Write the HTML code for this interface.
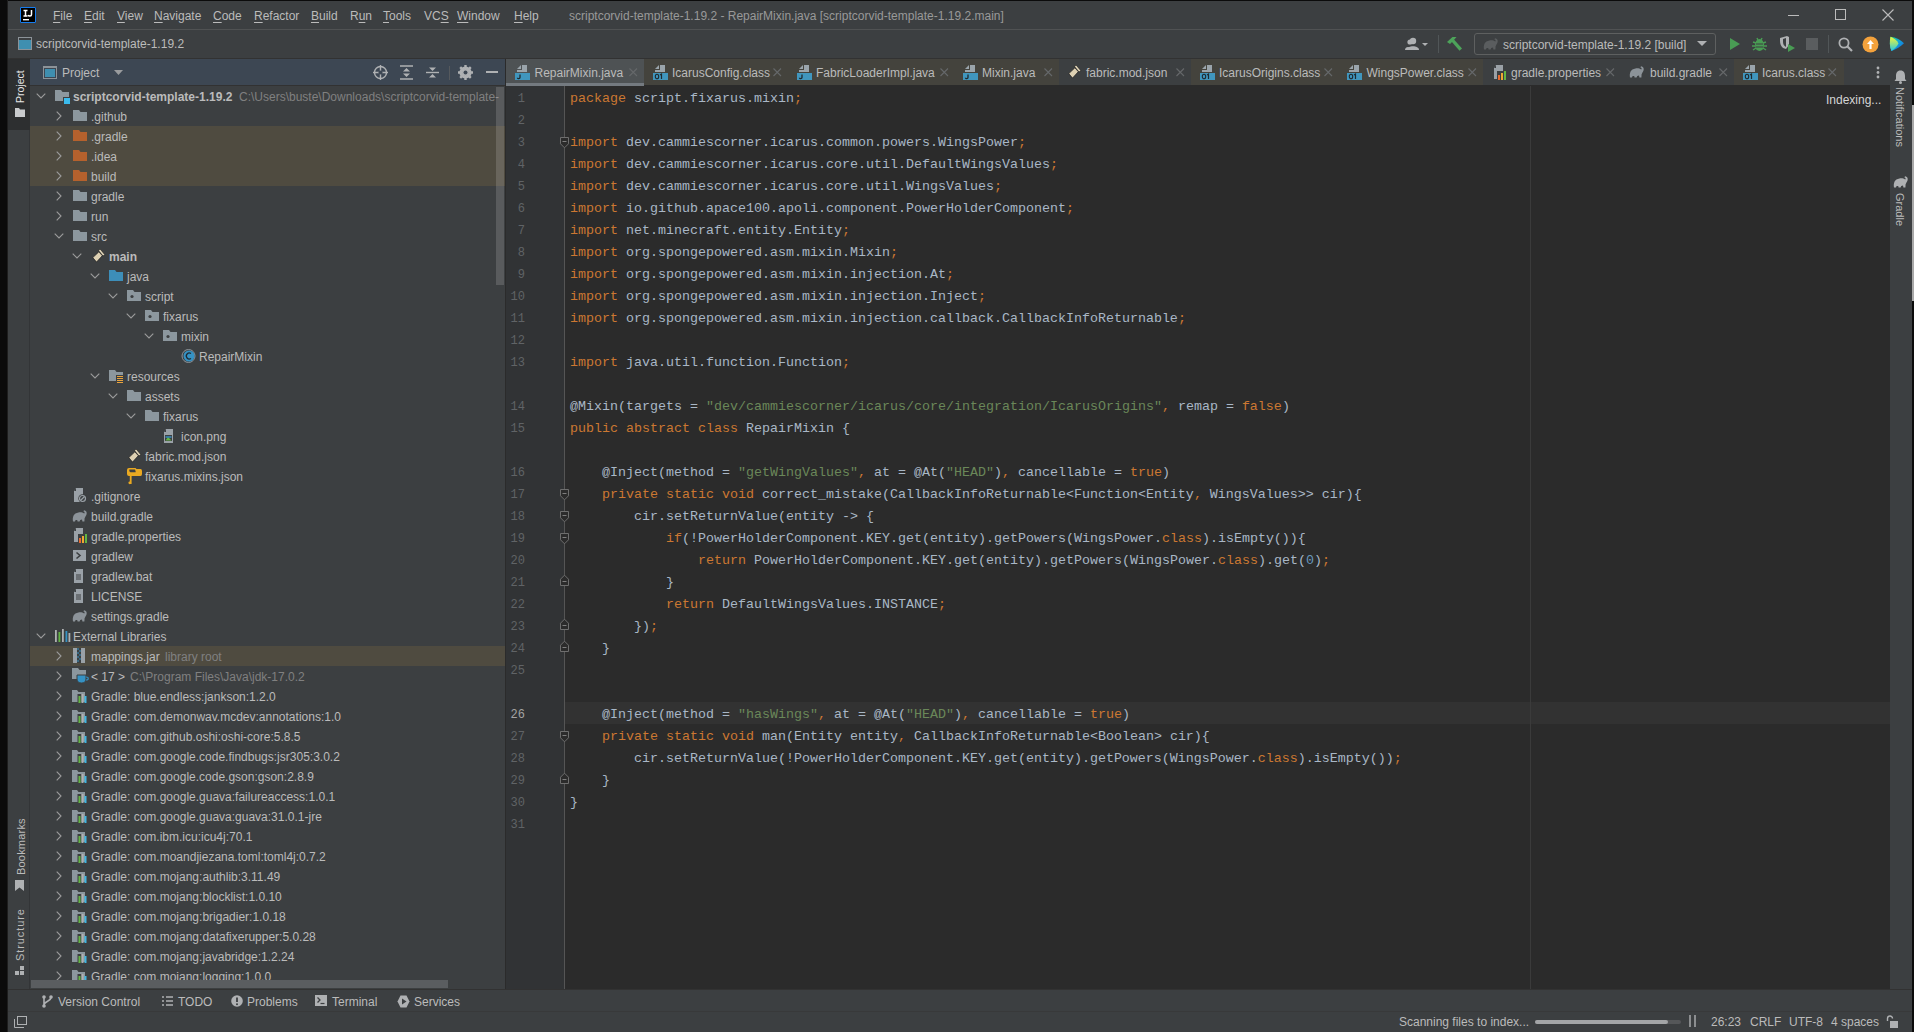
<!DOCTYPE html><html><head><meta charset="utf-8"><style>
*{margin:0;padding:0;box-sizing:border-box}
html,body{width:1914px;height:1032px;overflow:hidden;background:#0b0b0b;font-family:"Liberation Sans", sans-serif;font-size:12px;color:#bbbbbb}
.a{position:absolute}
.t{position:absolute;white-space:pre;line-height:14px}
svg{position:absolute;overflow:visible}
.code{position:absolute;left:570px;white-space:pre;font-family:"Liberation Mono", monospace;font-size:13.33px;line-height:22px;color:#a9b7c6}
.ln{position:absolute;width:40px;left:485px;text-align:right;font-family:"Liberation Mono", monospace;font-size:12px;line-height:22px;color:#606366}
.k{color:#cc7832}
.s{color:#6a8759}
.n{color:#6897bb}
.u{text-decoration:underline;text-underline-offset:2px}
</style></head><body>
<div class="a" style="left:8px;top:1px;width:1904px;height:1031px;background:#3c3f41"></div>
<div class="a" style="left:7px;top:0;width:1px;height:1032px;background:#1e1e1e"></div>
<div class="a" style="left:8px;top:29px;width:1904px;height:1px;background:#505253"></div>
<div class="a" style="left:20px;top:7px;width:16px;height:16px;background:#000;border:1.3px solid #167df0;border-radius:1px"></div>
<svg style="left:20px;top:7px" width="16" height="16"><path d="M3.5 3.5 H7.5 M5.5 3.5 V9 M3.5 9 H7.5" stroke="#fff" stroke-width="1.5" fill="none"/><path d="M11.5 3 V7.5 C11.5 9.5 8.5 9.5 8.2 8" stroke="#fff" stroke-width="1.5" fill="none"/><rect x="3" y="12" width="6" height="1.4" fill="#fff"/></svg>
<div class="t" style="left:53px;top:9px;color:#bbbbbb"><span class="u">F</span>ile</div>
<div class="t" style="left:84px;top:9px;color:#bbbbbb"><span class="u">E</span>dit</div>
<div class="t" style="left:117px;top:9px;color:#bbbbbb"><span class="u">V</span>iew</div>
<div class="t" style="left:154px;top:9px;color:#bbbbbb"><span class="u">N</span>avigate</div>
<div class="t" style="left:213px;top:9px;color:#bbbbbb"><span class="u">C</span>ode</div>
<div class="t" style="left:254px;top:9px;color:#bbbbbb"><span class="u">R</span>efactor</div>
<div class="t" style="left:311px;top:9px;color:#bbbbbb"><span class="u">B</span>uild</div>
<div class="t" style="left:350px;top:9px;color:#bbbbbb">R<span class="u">u</span>n</div>
<div class="t" style="left:383px;top:9px;color:#bbbbbb"><span class="u">T</span>ools</div>
<div class="t" style="left:424px;top:9px;color:#bbbbbb">VC<span class="u">S</span></div>
<div class="t" style="left:457px;top:9px;color:#bbbbbb"><span class="u">W</span>indow</div>
<div class="t" style="left:514px;top:9px;color:#bbbbbb"><span class="u">H</span>elp</div>
<div class="t" style="left:569px;top:9px;color:#999999">scriptcorvid-template-1.19.2 - RepairMixin.java [scriptcorvid-template-1.19.2.main]</div>
<div class="a" style="left:1788px;top:15px;width:11px;height:1px;background:#bbb"></div>
<div class="a" style="left:1835px;top:9px;width:11px;height:11px;border:1px solid #bbb"></div>
<svg style="left:1882px;top:9px" width="12" height="12"><path d="M0.5 0.5 L11.5 11.5 M11.5 0.5 L0.5 11.5" stroke="#bbb" stroke-width="1.1"/></svg>
<div class="a" style="left:8px;top:58px;width:1904px;height:1px;background:#323232"></div>
<div class="a" style="left:18px;top:37px;width:14px;height:13px;border:1px solid #8c9399;background:#3c3f41"></div>
<div class="a" style="left:19px;top:40px;width:12px;height:9px;background:#3f8fb0"></div>
<div class="t" style="left:36px;top:37px">scriptcorvid-template-1.19.2</div>
<svg style="left:1405px;top:37px" width="26" height="14"><circle cx="8" cy="4" r="3.2" fill="#afb1b3"/><path d="M2 13 C2 8 14 8 14 13 Z" fill="#afb1b3"/><circle cx="5" cy="5" r="2.6" fill="#afb1b3"/><path d="M0 13 C0 9 6 9 6 13Z" fill="#afb1b3"/><path d="M17 6 L23 6 L20 9 Z" fill="#afb1b3"/></svg>
<div class="a" style="left:1438px;top:35px;width:1px;height:18px;background:#515658"></div>
<svg style="left:1446px;top:36px" width="18" height="17"><path d="M1 6 L6.5 1 H10.5 L7 5 L4 8Z" fill="#4da35a"/><path d="M5.5 5.5 L8 3.5 L16 12.5 L13.5 14.8Z" fill="#4da35a"/></svg>
<div class="a" style="left:1474px;top:33px;width:242px;height:22px;border:1px solid #5e6060;border-radius:3px;background:#3c3f41"></div>
<svg style="left:1483px;top:38px" width="16" height="13"><path d="M1 11.5 C0.3 7 1.5 3 6.5 2.4 C9 2.1 11 2.6 12.2 3.6 C13 2.6 12.6 1.4 11.4 1.4 L12 0.2 C14.8 0.4 15.6 3.4 13.6 6.2 L12.6 8.2 L12.4 11.5 L10.4 11.5 L10 9.6 L8.2 9.9 L7.6 11.5 L5.6 11.5 L5.2 9.9 L3.6 9.9 L3 11.5 Z" fill="#5a5d5f"/></svg>
<div class="t" style="left:1503px;top:38px">scriptcorvid-template-1.19.2 [build]</div>
<svg style="left:1697px;top:41px" width="10" height="6"><path d="M0 0 L10 0 L5 5Z" fill="#afb1b3"/></svg>
<svg style="left:1729px;top:37px" width="12" height="14"><path d="M1 1 L11 7 L1 13Z" fill="#499c54"/></svg>
<svg style="left:1752px;top:36px" width="15" height="16"><ellipse cx="7.5" cy="9" rx="4.5" ry="6" fill="#499c54"/><path d="M1 6 L4 7 M14 6 L11 7 M0 10 L3 10 M15 10 L12 10 M1 14 L4 12 M14 14 L11 12 M5 2 L6 4 M10 2 L9 4" stroke="#499c54" stroke-width="1.5"/><path d="M4 8 L11 8 M4 11 L11 11" stroke="#3c3f41" stroke-width="1"/></svg>
<svg style="left:1779px;top:36px" width="17" height="17"><path d="M1 2 L8 0 L10 1 L10 9 L7 13 L4 12 C2 10 1 8 1 5Z" fill="#afb1b3"/><path d="M4 3 L7 2 L7 11 C5 10 4 8 4 6Z" fill="#3c3f41"/><path d="M9 8 L16 12 L9 16Z" fill="#499c54"/></svg>
<div class="a" style="left:1806px;top:38px;width:12px;height:12px;background:#5a5d5f"></div>
<div class="a" style="left:1828px;top:35px;width:1px;height:18px;background:#515658"></div>
<svg style="left:1838px;top:37px" width="15" height="15"><circle cx="6" cy="6" r="4.6" fill="none" stroke="#afb1b3" stroke-width="1.8"/><path d="M9.5 9.5 L14 14" stroke="#afb1b3" stroke-width="2.2"/></svg>
<svg style="left:1862px;top:36px" width="17" height="17"><circle cx="8.5" cy="8.5" r="8" fill="#f4a23c"/><path d="M8.5 4 L12 8 L9.6 8 L9.6 13 L7.4 13 L7.4 8 L5 8Z" fill="#fff"/></svg>
<svg style="left:1889px;top:36px" width="16" height="16"><defs><linearGradient id="tbg" x1="0" y1="0" x2="0" y2="1"><stop offset="0" stop-color="#f3f53c"/><stop offset="0.5" stop-color="#8fe08a"/><stop offset="1" stop-color="#22c7e6"/></linearGradient><linearGradient id="tbb" x1="0" y1="0" x2="1" y2="1"><stop offset="0" stop-color="#21d789"/><stop offset="0.5" stop-color="#0ea2e0"/><stop offset="1" stop-color="#1f5fd6"/></linearGradient></defs><path d="M1.5 0.8 C7 1.5 12 4 15 7.3 C12 10.5 7 13.5 2.5 15 C0.5 11 0.5 5 1.5 0.8Z" fill="url(#tbb)"/><path d="M1.5 0.8 C5 2 8 4.5 9.5 7.5 C8 10.5 5 13 2.5 15 C0.5 11 0.5 5 1.5 0.8Z" fill="url(#tbg)"/></svg>
<div class="a" style="left:8px;top:59px;width:22px;height:930px;background:#3c3f41"></div>
<div class="a" style="left:8px;top:59px;width:22px;height:71px;background:#2d2f30"></div>
<div class="a" style="left:29px;top:130px;width:1px;height:859px;background:#333537"></div>
<div class="t" style="left:14px;top:103px;color:#e6e6e6;transform-origin:0 0;transform:rotate(-90deg);font-size:10.5px;line-height:13px">Project</div>
<svg style="left:15px;top:108px" width="10" height="9"><path d="M0 0 L4 0 L5 1.5 L10 1.5 L10 9 L0 9Z" fill="#c9cbcd"/></svg>
<div class="t" style="left:14px;top:875px;color:#bbbbbb;transform-origin:0 0;transform:rotate(-90deg);font-size:11px;letter-spacing:0.2px">Bookmarks</div>
<svg style="left:15px;top:880px" width="9" height="11"><path d="M0 0 L9 0 L9 11 L4.5 7.5 L0 11Z" fill="#afb1b3"/></svg>
<div class="t" style="left:13px;top:961px;color:#bbbbbb;transform-origin:0 0;transform:rotate(-90deg);font-size:11px;letter-spacing:0.9px">Structure</div>
<svg style="left:15px;top:966px" width="10" height="10"><rect x="5" y="0" width="4" height="4" fill="#afb1b3"/><rect x="0" y="5" width="4" height="4" fill="#afb1b3"/><rect x="5" y="5" width="4" height="4" fill="#afb1b3"/></svg>
<div class="a" style="left:30px;top:59px;width:475px;height:26px;background:#3d4753"></div>
<div class="a" style="left:30px;top:85px;width:475px;height:1px;background:#323232"></div>
<div class="a" style="left:505px;top:59px;width:1px;height:930px;background:#2b2b2b"></div>
<div class="a" style="left:43px;top:66px;width:14px;height:13px;border:1px solid #8c9399;border-top-width:2px"></div>
<div class="a" style="left:45px;top:69px;width:10px;height:8px;background:#3f8fb0"></div>
<div class="t" style="left:62px;top:66px;color:#bbbbbb">Project</div>
<svg style="left:114px;top:70px" width="9" height="5"><path d="M0 0 L9 0 L4.5 5Z" fill="#9a9c9e"/></svg>
<svg style="left:373px;top:65px" width="15" height="15"><circle cx="7.5" cy="7.5" r="6" fill="none" stroke="#afb1b3" stroke-width="1.4"/><path d="M7.5 0 V15 M0 7.5 H15" stroke="#afb1b3" stroke-width="1.4"/><circle cx="7.5" cy="7.5" r="2" fill="#3d4753"/></svg>
<svg style="left:400px;top:65px" width="13" height="15"><path d="M0 1 H13 M0 14 H13" stroke="#afb1b3" stroke-width="1.4"/><path d="M6.5 3 L10 6.5 H3Z M6.5 12 L10 8.5 H3Z" fill="#afb1b3"/></svg>
<svg style="left:426px;top:65px" width="13" height="15"><path d="M0 7.5 H13" stroke="#afb1b3" stroke-width="1.4"/><path d="M6.5 6 L10 2.5 H3Z M6.5 9 L10 12.5 H3Z" fill="#afb1b3"/></svg>
<div class="a" style="left:449px;top:66px;width:1px;height:14px;background:#55595d"></div>
<svg style="left:458px;top:65px" width="15" height="15"><circle cx="7.5" cy="7.5" r="4.6" fill="none" stroke="#afb1b3" stroke-width="3"/><path d="M7.5 0 V15 M0 7.5 H15 M2.2 2.2 L12.8 12.8 M12.8 2.2 L2.2 12.8" stroke="#afb1b3" stroke-width="2.4"/><circle cx="7.5" cy="7.5" r="2" fill="#3d4753"/></svg>
<div class="a" style="left:486px;top:71px;width:12px;height:2px;background:#afb1b3"></div>
<div class="a" style="left:30px;top:86px;width:475px;height:903px;overflow:hidden">
<svg style="left:6px;top:7px" width="10" height="6"><path d="M0.7 0.7 L5 5 L9.3 0.7" fill="none" stroke="#9c9c9c" stroke-width="1.1"/></svg>
<svg style="left:25px;top:4px" width="14" height="12"><path d="M0 0 H6 L7.5 2 H14 V11 H0Z" fill="#8c979e"/></svg>
<div class="a" style="left:33px;top:11px;width:7px;height:7px;background:#3bbbed;border-left:1px solid #3c3f41;border-top:1px solid #3c3f41"></div>
<div class="t" style="left:43px;top:4px;font-weight:bold">scriptcorvid-template-1.19.2</div>
<div class="t" style="left:209px;top:4px;color:#808080">C:\Users\buste\Downloads\scriptcorvid-template-</div>
<svg style="left:26px;top:25px" width="6" height="10"><path d="M0.7 0.7 L5 5 L0.7 9.3" fill="none" stroke="#9c9c9c" stroke-width="1.1"/></svg>
<svg style="left:43px;top:24px" width="14" height="12"><path d="M0 0 H6 L7.5 2 H14 V11 H0Z" fill="#8c979e"/></svg>
<div class="t" style="left:61px;top:24px;font-weight:normal">.github</div>
<div class="a" style="left:0;top:40px;width:475px;height:20px;background:#4f4b40"></div>
<svg style="left:26px;top:45px" width="6" height="10"><path d="M0.7 0.7 L5 5 L0.7 9.3" fill="none" stroke="#9c9c9c" stroke-width="1.1"/></svg>
<svg style="left:43px;top:44px" width="14" height="12"><path d="M0 0 H6 L7.5 2 H14 V11 H0Z" fill="#b5612d"/></svg>
<div class="t" style="left:61px;top:44px;font-weight:normal">.gradle</div>
<div class="a" style="left:0;top:60px;width:475px;height:20px;background:#4f4b40"></div>
<svg style="left:26px;top:65px" width="6" height="10"><path d="M0.7 0.7 L5 5 L0.7 9.3" fill="none" stroke="#9c9c9c" stroke-width="1.1"/></svg>
<svg style="left:43px;top:64px" width="14" height="12"><path d="M0 0 H6 L7.5 2 H14 V11 H0Z" fill="#b5612d"/></svg>
<div class="t" style="left:61px;top:64px;font-weight:normal">.idea</div>
<div class="a" style="left:0;top:80px;width:475px;height:20px;background:#4f4b40"></div>
<svg style="left:26px;top:85px" width="6" height="10"><path d="M0.7 0.7 L5 5 L0.7 9.3" fill="none" stroke="#9c9c9c" stroke-width="1.1"/></svg>
<svg style="left:43px;top:84px" width="14" height="12"><path d="M0 0 H6 L7.5 2 H14 V11 H0Z" fill="#b5612d"/></svg>
<div class="t" style="left:61px;top:84px;font-weight:normal">build</div>
<svg style="left:26px;top:105px" width="6" height="10"><path d="M0.7 0.7 L5 5 L0.7 9.3" fill="none" stroke="#9c9c9c" stroke-width="1.1"/></svg>
<svg style="left:43px;top:104px" width="14" height="12"><path d="M0 0 H6 L7.5 2 H14 V11 H0Z" fill="#8c979e"/></svg>
<div class="t" style="left:61px;top:104px;font-weight:normal">gradle</div>
<svg style="left:26px;top:125px" width="6" height="10"><path d="M0.7 0.7 L5 5 L0.7 9.3" fill="none" stroke="#9c9c9c" stroke-width="1.1"/></svg>
<svg style="left:43px;top:124px" width="14" height="12"><path d="M0 0 H6 L7.5 2 H14 V11 H0Z" fill="#8c979e"/></svg>
<div class="t" style="left:61px;top:124px;font-weight:normal">run</div>
<svg style="left:24px;top:147px" width="10" height="6"><path d="M0.7 0.7 L5 5 L9.3 0.7" fill="none" stroke="#9c9c9c" stroke-width="1.1"/></svg>
<svg style="left:43px;top:144px" width="14" height="12"><path d="M0 0 H6 L7.5 2 H14 V11 H0Z" fill="#8c979e"/></svg>
<div class="t" style="left:61px;top:144px;font-weight:normal">src</div>
<svg style="left:42px;top:167px" width="10" height="6"><path d="M0.7 0.7 L5 5 L9.3 0.7" fill="none" stroke="#9c9c9c" stroke-width="1.1"/></svg>
<svg style="left:61px;top:162px" width="15" height="15"><path d="M1.8 9.6 L7.9 3.8 L11.3 7.7 L5.5 14.1Z" fill="#ddd0b2" stroke="#1e1e1e" stroke-width="0.7"/><path d="M7.6 2.7 L9.2 1.1 L13.7 6.5 L12.1 8.1Z" fill="#e3d7ba" stroke="#1e1e1e" stroke-width="0.7"/></svg>
<div class="t" style="left:79px;top:164px;font-weight:bold">main</div>
<svg style="left:60px;top:187px" width="10" height="6"><path d="M0.7 0.7 L5 5 L9.3 0.7" fill="none" stroke="#9c9c9c" stroke-width="1.1"/></svg>
<svg style="left:79px;top:184px" width="14" height="12"><path d="M0 0 H6 L7.5 2 H14 V11 H0Z" fill="#3d8eb9"/></svg>
<div class="t" style="left:97px;top:184px;font-weight:normal">java</div>
<svg style="left:78px;top:207px" width="10" height="6"><path d="M0.7 0.7 L5 5 L9.3 0.7" fill="none" stroke="#9c9c9c" stroke-width="1.1"/></svg>
<svg style="left:97px;top:204px" width="14" height="12"><path d="M0 0 H6 L7.5 2 H14 V11 H0Z" fill="#8c979e"/><circle cx="5" cy="6.5" r="1.6" fill="#3c3f41"/></svg>
<div class="t" style="left:115px;top:204px;font-weight:normal">script</div>
<svg style="left:96px;top:227px" width="10" height="6"><path d="M0.7 0.7 L5 5 L9.3 0.7" fill="none" stroke="#9c9c9c" stroke-width="1.1"/></svg>
<svg style="left:115px;top:224px" width="14" height="12"><path d="M0 0 H6 L7.5 2 H14 V11 H0Z" fill="#8c979e"/><circle cx="5" cy="6.5" r="1.6" fill="#3c3f41"/></svg>
<div class="t" style="left:133px;top:224px;font-weight:normal">fixarus</div>
<svg style="left:114px;top:247px" width="10" height="6"><path d="M0.7 0.7 L5 5 L9.3 0.7" fill="none" stroke="#9c9c9c" stroke-width="1.1"/></svg>
<svg style="left:133px;top:244px" width="14" height="12"><path d="M0 0 H6 L7.5 2 H14 V11 H0Z" fill="#8c979e"/><circle cx="5" cy="6.5" r="1.6" fill="#3c3f41"/></svg>
<div class="t" style="left:151px;top:244px;font-weight:normal">mixin</div>
<svg style="left:151px;top:263px" width="14" height="14"><circle cx="7.5" cy="7" r="6.5" fill="#3c3f41" stroke="#8c9399" stroke-width="1"/><circle cx="8" cy="7" r="5.5" fill="#3592c4"/><path d="M10 4.5 A3 3 0 1 0 10 9.5" fill="none" stroke="#1e2a33" stroke-width="1.3"/></svg>
<div class="t" style="left:169px;top:264px;font-weight:normal">RepairMixin</div>
<svg style="left:60px;top:287px" width="10" height="6"><path d="M0.7 0.7 L5 5 L9.3 0.7" fill="none" stroke="#9c9c9c" stroke-width="1.1"/></svg>
<svg style="left:79px;top:284px" width="14" height="12"><path d="M0 0 H6 L7.5 2 H14 V11 H0Z" fill="#8c979e"/></svg>
<svg style="left:86px;top:289px" width="8" height="8"><rect x="0" y="0" width="8" height="8" fill="#3c3f41"/><path d="M1 1.5 H7 M1 3.5 H7 M1 5.5 H7 M1 7.5 H7" stroke="#e8a33e" stroke-width="1"/></svg>
<div class="t" style="left:97px;top:284px;font-weight:normal">resources</div>
<svg style="left:78px;top:307px" width="10" height="6"><path d="M0.7 0.7 L5 5 L9.3 0.7" fill="none" stroke="#9c9c9c" stroke-width="1.1"/></svg>
<svg style="left:97px;top:304px" width="14" height="12"><path d="M0 0 H6 L7.5 2 H14 V11 H0Z" fill="#8c979e"/></svg>
<div class="t" style="left:115px;top:304px;font-weight:normal">assets</div>
<svg style="left:96px;top:327px" width="10" height="6"><path d="M0.7 0.7 L5 5 L9.3 0.7" fill="none" stroke="#9c9c9c" stroke-width="1.1"/></svg>
<svg style="left:115px;top:324px" width="14" height="12"><path d="M0 0 H6 L7.5 2 H14 V11 H0Z" fill="#8c979e"/></svg>
<div class="t" style="left:133px;top:324px;font-weight:normal">fixarus</div>
<svg style="left:133px;top:343px" width="14" height="14"><path d="M3 0 H10 V14 H1 V3Z" fill="#9aa1a7"/><path d="M1 3 H3 V0Z" fill="#3c3f41"/><rect x="2" y="6" width="7" height="6" fill="#3c3f41"/><path d="M2.5 11.5 L5 8 L8.5 11.5Z" fill="#62b543"/><rect x="2.5" y="7" width="6" height="2" fill="#3592c4" opacity="0.7"/></svg>
<div class="t" style="left:151px;top:344px;font-weight:normal">icon.png</div>
<svg style="left:97px;top:362px" width="15" height="15"><path d="M1.8 9.6 L7.9 3.8 L11.3 7.7 L5.5 14.1Z" fill="#ddd0b2" stroke="#1e1e1e" stroke-width="0.7"/><path d="M7.6 2.7 L9.2 1.1 L13.7 6.5 L12.1 8.1Z" fill="#e3d7ba" stroke="#1e1e1e" stroke-width="0.7"/></svg>
<div class="t" style="left:115px;top:364px;font-weight:normal">fabric.mod.json</div>
<svg style="left:96px;top:381px" width="17" height="18"><path d="M1 3 Q1 1 3 1 H9.5 L10.5 2 H14.5 Q16 2 16 4 V7 Q16 9 14.5 9 H3 Q1 9 1 7Z" fill="#eaa921"/><path d="M3.3 2.6 H9 L9.6 4.2 V5.2 H4.4 L3.3 4.2Z" fill="#3c3f41"/><rect x="3.8" y="8.5" width="1.8" height="8.5" fill="#eaa921"/><circle cx="3.8" cy="15.8" r="1.4" fill="#eaa921"/></svg>
<div class="t" style="left:115px;top:384px;font-weight:normal">fixarus.mixins.json</div>
<svg style="left:43px;top:402px" width="14" height="14"><path d="M3 0 H10 V14 H1 V3Z" fill="#9aa1a7"/><path d="M1 3 H3 V0Z" fill="#3c3f41"/><circle cx="9.5" cy="10.5" r="4.2" fill="#3c3f41"/><circle cx="9.5" cy="10.5" r="3" fill="none" stroke="#9aa1a7" stroke-width="1.2"/><path d="M7.5 12.5 L11.5 8.5" stroke="#9aa1a7" stroke-width="1.2"/></svg>
<div class="t" style="left:61px;top:404px;font-weight:normal">.gitignore</div>
<svg style="left:42px;top:424px" width="16" height="12"><path d="M1 11.5 C0.3 7 1.5 3 6.5 2.4 C9 2.1 11 2.6 12.2 3.6 C13 2.6 12.6 1.4 11.4 1.4 L12 0.2 C14.8 0.4 15.6 3.4 13.6 6.2 L12.6 8.2 L12.4 11.5 L10.4 11.5 L10 9.6 L8.2 9.9 L7.6 11.5 L5.6 11.5 L5.2 9.9 L3.6 9.9 L3 11.5 Z" fill="#8c9399"/></svg>
<div class="t" style="left:61px;top:424px;font-weight:normal">build.gradle</div>
<svg style="left:43px;top:442px" width="14" height="14"><path d="M3 0 H10 V14 H1 V3Z" fill="#9aa1a7"/><path d="M1 3 H3 V0Z" fill="#3c3f41"/><rect x="5" y="6" width="10" height="9" fill="#3c3f41"/><rect x="6" y="10" width="2" height="5" fill="#e86a2f"/><rect x="9" y="8" width="2" height="7" fill="#f0a732"/><rect x="12" y="6" width="2" height="9" fill="#62b543"/></svg>
<div class="t" style="left:61px;top:444px;font-weight:normal">gradle.properties</div>
<svg style="left:43px;top:464px" width="13" height="12"><rect x="0" y="0" width="13" height="11" fill="#9aa1a7"/><path d="M3.5 2.5 L7 5.5 L3.5 8.5" fill="none" stroke="#3c3f41" stroke-width="1.6"/></svg>
<div class="t" style="left:61px;top:464px;font-weight:normal">gradlew</div>
<svg style="left:43px;top:483px" width="14" height="14"><path d="M3 0 H10 V14 H1 V3Z" fill="#9aa1a7"/><path d="M1 3 H3 V0Z" fill="#3c3f41"/><path d="M3 6 H8 M3 8 H8 M3 10 H8" stroke="#3c3f41" stroke-width="1"/></svg>
<div class="t" style="left:61px;top:484px;font-weight:normal">gradlew.bat</div>
<svg style="left:43px;top:503px" width="14" height="14"><path d="M3 0 H10 V14 H1 V3Z" fill="#9aa1a7"/><path d="M1 3 H3 V0Z" fill="#3c3f41"/><path d="M3 6 H8 M3 8 H8 M3 10 H8" stroke="#3c3f41" stroke-width="1"/></svg>
<div class="t" style="left:61px;top:504px;font-weight:normal">LICENSE</div>
<svg style="left:42px;top:524px" width="16" height="12"><path d="M1 11.5 C0.3 7 1.5 3 6.5 2.4 C9 2.1 11 2.6 12.2 3.6 C13 2.6 12.6 1.4 11.4 1.4 L12 0.2 C14.8 0.4 15.6 3.4 13.6 6.2 L12.6 8.2 L12.4 11.5 L10.4 11.5 L10 9.6 L8.2 9.9 L7.6 11.5 L5.6 11.5 L5.2 9.9 L3.6 9.9 L3 11.5 Z" fill="#8c9399"/></svg>
<div class="t" style="left:61px;top:524px;font-weight:normal">settings.gradle</div>
<svg style="left:6px;top:547px" width="10" height="6"><path d="M0.7 0.7 L5 5 L9.3 0.7" fill="none" stroke="#9c9c9c" stroke-width="1.1"/></svg>
<svg style="left:24px;top:543px" width="16" height="14"><rect x="1" y="1" width="1.8" height="12" fill="#afb1b3"/><rect x="4.5" y="3" width="1.8" height="10" fill="#62b543"/><rect x="8" y="0" width="1.8" height="13" fill="#afb1b3"/><rect x="11.5" y="2" width="1.8" height="11" fill="#3592c4"/><rect x="14.5" y="4" width="1.8" height="9" fill="#afb1b3"/></svg>
<div class="t" style="left:43px;top:544px;font-weight:normal">External Libraries</div>
<div class="a" style="left:0;top:560px;width:475px;height:20px;background:#4f4b40"></div>
<svg style="left:26px;top:565px" width="6" height="10"><path d="M0.7 0.7 L5 5 L0.7 9.3" fill="none" stroke="#9c9c9c" stroke-width="1.1"/></svg>
<svg style="left:43px;top:562px" width="12" height="15"><rect x="0" y="0" width="12" height="15" fill="#9aa1a7"/><rect x="4" y="0" width="4" height="15" fill="#3c3f41"/><path d="M4 1 H6 M6 3 H8 M4 5 H6 M6 7 H8 M4 9 H6 M6 11 H8 M4 13 H6" stroke="#3592c4" stroke-width="1.2"/></svg>
<div class="t" style="left:61px;top:564px;font-weight:normal">mappings.jar</div>
<div class="t" style="left:135px;top:564px;color:#808080">library root</div>
<svg style="left:26px;top:585px" width="6" height="10"><path d="M0.7 0.7 L5 5 L0.7 9.3" fill="none" stroke="#9c9c9c" stroke-width="1.1"/></svg>
<svg style="left:42px;top:582px" width="14" height="12"><path d="M0 0 H6 L7.5 2 H14 V11 H0Z" fill="#8c979e"/></svg>
<svg style="left:47px;top:589px" width="12" height="9"><path d="M0 0 H9 V4 C9 7 7 8 4.5 8 C2 8 0 7 0 4Z" fill="#3592c4" stroke="#3c3f41" stroke-width="1"/><path d="M9 2 C12 2 12 5 9 5" fill="none" stroke="#3592c4" stroke-width="1.2"/></svg>
<div class="t" style="left:61px;top:584px;font-weight:normal">&lt; 17 &gt;</div>
<div class="t" style="left:100px;top:584px;color:#808080">C:\Program Files\Java\jdk-17.0.2</div>
<svg style="left:26px;top:605px" width="6" height="10"><path d="M0.7 0.7 L5 5 L0.7 9.3" fill="none" stroke="#9c9c9c" stroke-width="1.1"/></svg>
<svg style="left:42px;top:603px" width="16" height="14"><path d="M0 1 H5 L6.5 3 H13 V13 H0Z" fill="#8c979e"/><rect x="5.5" y="5" width="4" height="9" fill="#3c3f41"/><rect x="6.5" y="7" width="2" height="7" fill="#62b543"/><rect x="9.5" y="5" width="2" height="9" fill="#afb1b3"/><rect x="12.5" y="7" width="2" height="7" fill="#40b6e0"/><path d="M5 5 H14 V13 H5Z" fill="none"/></svg>
<div class="t" style="left:61px;top:604px;font-weight:normal">Gradle: blue.endless:jankson:1.2.0</div>
<svg style="left:26px;top:625px" width="6" height="10"><path d="M0.7 0.7 L5 5 L0.7 9.3" fill="none" stroke="#9c9c9c" stroke-width="1.1"/></svg>
<svg style="left:42px;top:623px" width="16" height="14"><path d="M0 1 H5 L6.5 3 H13 V13 H0Z" fill="#8c979e"/><rect x="5.5" y="5" width="4" height="9" fill="#3c3f41"/><rect x="6.5" y="7" width="2" height="7" fill="#62b543"/><rect x="9.5" y="5" width="2" height="9" fill="#afb1b3"/><rect x="12.5" y="7" width="2" height="7" fill="#40b6e0"/><path d="M5 5 H14 V13 H5Z" fill="none"/></svg>
<div class="t" style="left:61px;top:624px;font-weight:normal">Gradle: com.demonwav.mcdev:annotations:1.0</div>
<svg style="left:26px;top:645px" width="6" height="10"><path d="M0.7 0.7 L5 5 L0.7 9.3" fill="none" stroke="#9c9c9c" stroke-width="1.1"/></svg>
<svg style="left:42px;top:643px" width="16" height="14"><path d="M0 1 H5 L6.5 3 H13 V13 H0Z" fill="#8c979e"/><rect x="5.5" y="5" width="4" height="9" fill="#3c3f41"/><rect x="6.5" y="7" width="2" height="7" fill="#62b543"/><rect x="9.5" y="5" width="2" height="9" fill="#afb1b3"/><rect x="12.5" y="7" width="2" height="7" fill="#40b6e0"/><path d="M5 5 H14 V13 H5Z" fill="none"/></svg>
<div class="t" style="left:61px;top:644px;font-weight:normal">Gradle: com.github.oshi:oshi-core:5.8.5</div>
<svg style="left:26px;top:665px" width="6" height="10"><path d="M0.7 0.7 L5 5 L0.7 9.3" fill="none" stroke="#9c9c9c" stroke-width="1.1"/></svg>
<svg style="left:42px;top:663px" width="16" height="14"><path d="M0 1 H5 L6.5 3 H13 V13 H0Z" fill="#8c979e"/><rect x="5.5" y="5" width="4" height="9" fill="#3c3f41"/><rect x="6.5" y="7" width="2" height="7" fill="#62b543"/><rect x="9.5" y="5" width="2" height="9" fill="#afb1b3"/><rect x="12.5" y="7" width="2" height="7" fill="#40b6e0"/><path d="M5 5 H14 V13 H5Z" fill="none"/></svg>
<div class="t" style="left:61px;top:664px;font-weight:normal">Gradle: com.google.code.findbugs:jsr305:3.0.2</div>
<svg style="left:26px;top:685px" width="6" height="10"><path d="M0.7 0.7 L5 5 L0.7 9.3" fill="none" stroke="#9c9c9c" stroke-width="1.1"/></svg>
<svg style="left:42px;top:683px" width="16" height="14"><path d="M0 1 H5 L6.5 3 H13 V13 H0Z" fill="#8c979e"/><rect x="5.5" y="5" width="4" height="9" fill="#3c3f41"/><rect x="6.5" y="7" width="2" height="7" fill="#62b543"/><rect x="9.5" y="5" width="2" height="9" fill="#afb1b3"/><rect x="12.5" y="7" width="2" height="7" fill="#40b6e0"/><path d="M5 5 H14 V13 H5Z" fill="none"/></svg>
<div class="t" style="left:61px;top:684px;font-weight:normal">Gradle: com.google.code.gson:gson:2.8.9</div>
<svg style="left:26px;top:705px" width="6" height="10"><path d="M0.7 0.7 L5 5 L0.7 9.3" fill="none" stroke="#9c9c9c" stroke-width="1.1"/></svg>
<svg style="left:42px;top:703px" width="16" height="14"><path d="M0 1 H5 L6.5 3 H13 V13 H0Z" fill="#8c979e"/><rect x="5.5" y="5" width="4" height="9" fill="#3c3f41"/><rect x="6.5" y="7" width="2" height="7" fill="#62b543"/><rect x="9.5" y="5" width="2" height="9" fill="#afb1b3"/><rect x="12.5" y="7" width="2" height="7" fill="#40b6e0"/><path d="M5 5 H14 V13 H5Z" fill="none"/></svg>
<div class="t" style="left:61px;top:704px;font-weight:normal">Gradle: com.google.guava:failureaccess:1.0.1</div>
<svg style="left:26px;top:725px" width="6" height="10"><path d="M0.7 0.7 L5 5 L0.7 9.3" fill="none" stroke="#9c9c9c" stroke-width="1.1"/></svg>
<svg style="left:42px;top:723px" width="16" height="14"><path d="M0 1 H5 L6.5 3 H13 V13 H0Z" fill="#8c979e"/><rect x="5.5" y="5" width="4" height="9" fill="#3c3f41"/><rect x="6.5" y="7" width="2" height="7" fill="#62b543"/><rect x="9.5" y="5" width="2" height="9" fill="#afb1b3"/><rect x="12.5" y="7" width="2" height="7" fill="#40b6e0"/><path d="M5 5 H14 V13 H5Z" fill="none"/></svg>
<div class="t" style="left:61px;top:724px;font-weight:normal">Gradle: com.google.guava:guava:31.0.1-jre</div>
<svg style="left:26px;top:745px" width="6" height="10"><path d="M0.7 0.7 L5 5 L0.7 9.3" fill="none" stroke="#9c9c9c" stroke-width="1.1"/></svg>
<svg style="left:42px;top:743px" width="16" height="14"><path d="M0 1 H5 L6.5 3 H13 V13 H0Z" fill="#8c979e"/><rect x="5.5" y="5" width="4" height="9" fill="#3c3f41"/><rect x="6.5" y="7" width="2" height="7" fill="#62b543"/><rect x="9.5" y="5" width="2" height="9" fill="#afb1b3"/><rect x="12.5" y="7" width="2" height="7" fill="#40b6e0"/><path d="M5 5 H14 V13 H5Z" fill="none"/></svg>
<div class="t" style="left:61px;top:744px;font-weight:normal">Gradle: com.ibm.icu:icu4j:70.1</div>
<svg style="left:26px;top:765px" width="6" height="10"><path d="M0.7 0.7 L5 5 L0.7 9.3" fill="none" stroke="#9c9c9c" stroke-width="1.1"/></svg>
<svg style="left:42px;top:763px" width="16" height="14"><path d="M0 1 H5 L6.5 3 H13 V13 H0Z" fill="#8c979e"/><rect x="5.5" y="5" width="4" height="9" fill="#3c3f41"/><rect x="6.5" y="7" width="2" height="7" fill="#62b543"/><rect x="9.5" y="5" width="2" height="9" fill="#afb1b3"/><rect x="12.5" y="7" width="2" height="7" fill="#40b6e0"/><path d="M5 5 H14 V13 H5Z" fill="none"/></svg>
<div class="t" style="left:61px;top:764px;font-weight:normal">Gradle: com.moandjiezana.toml:toml4j:0.7.2</div>
<svg style="left:26px;top:785px" width="6" height="10"><path d="M0.7 0.7 L5 5 L0.7 9.3" fill="none" stroke="#9c9c9c" stroke-width="1.1"/></svg>
<svg style="left:42px;top:783px" width="16" height="14"><path d="M0 1 H5 L6.5 3 H13 V13 H0Z" fill="#8c979e"/><rect x="5.5" y="5" width="4" height="9" fill="#3c3f41"/><rect x="6.5" y="7" width="2" height="7" fill="#62b543"/><rect x="9.5" y="5" width="2" height="9" fill="#afb1b3"/><rect x="12.5" y="7" width="2" height="7" fill="#40b6e0"/><path d="M5 5 H14 V13 H5Z" fill="none"/></svg>
<div class="t" style="left:61px;top:784px;font-weight:normal">Gradle: com.mojang:authlib:3.11.49</div>
<svg style="left:26px;top:805px" width="6" height="10"><path d="M0.7 0.7 L5 5 L0.7 9.3" fill="none" stroke="#9c9c9c" stroke-width="1.1"/></svg>
<svg style="left:42px;top:803px" width="16" height="14"><path d="M0 1 H5 L6.5 3 H13 V13 H0Z" fill="#8c979e"/><rect x="5.5" y="5" width="4" height="9" fill="#3c3f41"/><rect x="6.5" y="7" width="2" height="7" fill="#62b543"/><rect x="9.5" y="5" width="2" height="9" fill="#afb1b3"/><rect x="12.5" y="7" width="2" height="7" fill="#40b6e0"/><path d="M5 5 H14 V13 H5Z" fill="none"/></svg>
<div class="t" style="left:61px;top:804px;font-weight:normal">Gradle: com.mojang:blocklist:1.0.10</div>
<svg style="left:26px;top:825px" width="6" height="10"><path d="M0.7 0.7 L5 5 L0.7 9.3" fill="none" stroke="#9c9c9c" stroke-width="1.1"/></svg>
<svg style="left:42px;top:823px" width="16" height="14"><path d="M0 1 H5 L6.5 3 H13 V13 H0Z" fill="#8c979e"/><rect x="5.5" y="5" width="4" height="9" fill="#3c3f41"/><rect x="6.5" y="7" width="2" height="7" fill="#62b543"/><rect x="9.5" y="5" width="2" height="9" fill="#afb1b3"/><rect x="12.5" y="7" width="2" height="7" fill="#40b6e0"/><path d="M5 5 H14 V13 H5Z" fill="none"/></svg>
<div class="t" style="left:61px;top:824px;font-weight:normal">Gradle: com.mojang:brigadier:1.0.18</div>
<svg style="left:26px;top:845px" width="6" height="10"><path d="M0.7 0.7 L5 5 L0.7 9.3" fill="none" stroke="#9c9c9c" stroke-width="1.1"/></svg>
<svg style="left:42px;top:843px" width="16" height="14"><path d="M0 1 H5 L6.5 3 H13 V13 H0Z" fill="#8c979e"/><rect x="5.5" y="5" width="4" height="9" fill="#3c3f41"/><rect x="6.5" y="7" width="2" height="7" fill="#62b543"/><rect x="9.5" y="5" width="2" height="9" fill="#afb1b3"/><rect x="12.5" y="7" width="2" height="7" fill="#40b6e0"/><path d="M5 5 H14 V13 H5Z" fill="none"/></svg>
<div class="t" style="left:61px;top:844px;font-weight:normal">Gradle: com.mojang:datafixerupper:5.0.28</div>
<svg style="left:26px;top:865px" width="6" height="10"><path d="M0.7 0.7 L5 5 L0.7 9.3" fill="none" stroke="#9c9c9c" stroke-width="1.1"/></svg>
<svg style="left:42px;top:863px" width="16" height="14"><path d="M0 1 H5 L6.5 3 H13 V13 H0Z" fill="#8c979e"/><rect x="5.5" y="5" width="4" height="9" fill="#3c3f41"/><rect x="6.5" y="7" width="2" height="7" fill="#62b543"/><rect x="9.5" y="5" width="2" height="9" fill="#afb1b3"/><rect x="12.5" y="7" width="2" height="7" fill="#40b6e0"/><path d="M5 5 H14 V13 H5Z" fill="none"/></svg>
<div class="t" style="left:61px;top:864px;font-weight:normal">Gradle: com.mojang:javabridge:1.2.24</div>
<svg style="left:26px;top:885px" width="6" height="10"><path d="M0.7 0.7 L5 5 L0.7 9.3" fill="none" stroke="#9c9c9c" stroke-width="1.1"/></svg>
<svg style="left:42px;top:883px" width="16" height="14"><path d="M0 1 H5 L6.5 3 H13 V13 H0Z" fill="#8c979e"/><rect x="5.5" y="5" width="4" height="9" fill="#3c3f41"/><rect x="6.5" y="7" width="2" height="7" fill="#62b543"/><rect x="9.5" y="5" width="2" height="9" fill="#afb1b3"/><rect x="12.5" y="7" width="2" height="7" fill="#40b6e0"/><path d="M5 5 H14 V13 H5Z" fill="none"/></svg>
<div class="t" style="left:61px;top:884px;font-weight:normal">Gradle: com.mojang:logging:1.0.0</div>
</div>
<div class="a" style="left:496px;top:87px;width:8px;height:198px;background:rgba(255,255,255,0.15)"></div>
<div class="a" style="left:31px;top:980px;width:417px;height:8px;background:#5a5d60"></div>
<div class="a" style="left:506px;top:59px;width:1384px;height:27px;background:#3c3f41"></div>
<div class="a" style="left:506px;top:59px;width:138px;height:26px;background:#4e5254"></div>
<svg style="left:515.0px;top:65px" width="15" height="15"><path d="M2 4 L6 0 V4Z M7 0 H12 V7 H2 V5 H7Z" fill="#9aa4ab"/><rect x="0" y="8" width="15" height="7" fill="#4096be"/></svg>
<svg style="left:515.0px;top:65px" width="15" height="15"><path d="M5 9.5 V12.5 C5 14 2.5 14 2.5 12.8" fill="none" stroke="#1f2a30" stroke-width="1.3"/></svg>
<div class="t" style="left:534.5px;top:66px">RepairMixin.java</div>
<svg style="left:628.5px;top:68px" width="9" height="9"><path d="M0.5 0.5 L8 8 M8 0.5 L0.5 8" stroke="#65686a" stroke-width="1.1"/></svg>
<div class="a" style="left:644px;top:59px;width:145px;height:26px;background:#44433d"></div>
<svg style="left:652.5px;top:65px" width="15" height="15"><path d="M2 4 L6 0 V4Z M7 0 H12 V7 H2 V5 H7Z" fill="#9aa4ab"/><rect x="0" y="8" width="15" height="7" fill="#4096be"/></svg>
<svg style="left:652.5px;top:65px" width="15" height="15"><ellipse cx="4" cy="11.5" rx="1.7" ry="2.3" fill="none" stroke="#1f2a30" stroke-width="1.1"/><path d="M7 10 L8.5 9 V14" fill="none" stroke="#1f2a30" stroke-width="1.2"/></svg>
<div class="t" style="left:672px;top:66px">IcarusConfig.class</div>
<svg style="left:773px;top:68px" width="9" height="9"><path d="M0.5 0.5 L8 8 M8 0.5 L0.5 8" stroke="#65686a" stroke-width="1.1"/></svg>
<div class="a" style="left:789px;top:59px;width:166px;height:26px;background:#44433d"></div>
<svg style="left:796.5px;top:65px" width="15" height="15"><path d="M2 4 L6 0 V4Z M7 0 H12 V7 H2 V5 H7Z" fill="#9aa4ab"/><rect x="0" y="8" width="15" height="7" fill="#4096be"/></svg>
<svg style="left:796.5px;top:65px" width="15" height="15"><path d="M5 9.5 V12.5 C5 14 2.5 14 2.5 12.8" fill="none" stroke="#1f2a30" stroke-width="1.3"/></svg>
<div class="t" style="left:816px;top:66px">FabricLoaderImpl.java</div>
<svg style="left:939.5px;top:68px" width="9" height="9"><path d="M0.5 0.5 L8 8 M8 0.5 L0.5 8" stroke="#65686a" stroke-width="1.1"/></svg>
<div class="a" style="left:955px;top:59px;width:104px;height:26px;background:#44433d"></div>
<svg style="left:962.5px;top:65px" width="15" height="15"><path d="M2 4 L6 0 V4Z M7 0 H12 V7 H2 V5 H7Z" fill="#9aa4ab"/><rect x="0" y="8" width="15" height="7" fill="#4096be"/></svg>
<svg style="left:962.5px;top:65px" width="15" height="15"><path d="M5 9.5 V12.5 C5 14 2.5 14 2.5 12.8" fill="none" stroke="#1f2a30" stroke-width="1.3"/></svg>
<div class="t" style="left:982px;top:66px">Mixin.java</div>
<svg style="left:1043.5px;top:68px" width="9" height="9"><path d="M0.5 0.5 L8 8 M8 0.5 L0.5 8" stroke="#65686a" stroke-width="1.1"/></svg>
<div class="a" style="left:1059px;top:59px;width:132px;height:26px;background:#3c3f41"></div>
<svg style="left:1067px;top:64px" width="15" height="15"><path d="M1.8 9.6 L7.9 3.8 L11.3 7.7 L5.5 14.1Z" fill="#ddd0b2" stroke="#1e1e1e" stroke-width="0.7"/><path d="M7.6 2.7 L9.2 1.1 L13.7 6.5 L12.1 8.1Z" fill="#e3d7ba" stroke="#1e1e1e" stroke-width="0.7"/></svg>
<div class="t" style="left:1086px;top:66px">fabric.mod.json</div>
<svg style="left:1176px;top:68px" width="9" height="9"><path d="M0.5 0.5 L8 8 M8 0.5 L0.5 8" stroke="#65686a" stroke-width="1.1"/></svg>
<div class="a" style="left:1191px;top:59px;width:148px;height:26px;background:#44433d"></div>
<svg style="left:1199.5px;top:65px" width="15" height="15"><path d="M2 4 L6 0 V4Z M7 0 H12 V7 H2 V5 H7Z" fill="#9aa4ab"/><rect x="0" y="8" width="15" height="7" fill="#4096be"/></svg>
<svg style="left:1199.5px;top:65px" width="15" height="15"><ellipse cx="4" cy="11.5" rx="1.7" ry="2.3" fill="none" stroke="#1f2a30" stroke-width="1.1"/><path d="M7 10 L8.5 9 V14" fill="none" stroke="#1f2a30" stroke-width="1.2"/></svg>
<div class="t" style="left:1219px;top:66px">IcarusOrigins.class</div>
<svg style="left:1323.5px;top:68px" width="9" height="9"><path d="M0.5 0.5 L8 8 M8 0.5 L0.5 8" stroke="#65686a" stroke-width="1.1"/></svg>
<div class="a" style="left:1339px;top:59px;width:144px;height:26px;background:#44433d"></div>
<svg style="left:1347.0px;top:65px" width="15" height="15"><path d="M2 4 L6 0 V4Z M7 0 H12 V7 H2 V5 H7Z" fill="#9aa4ab"/><rect x="0" y="8" width="15" height="7" fill="#4096be"/></svg>
<svg style="left:1347.0px;top:65px" width="15" height="15"><ellipse cx="4" cy="11.5" rx="1.7" ry="2.3" fill="none" stroke="#1f2a30" stroke-width="1.1"/><path d="M7 10 L8.5 9 V14" fill="none" stroke="#1f2a30" stroke-width="1.2"/></svg>
<div class="t" style="left:1366.5px;top:66px">WingsPower.class</div>
<svg style="left:1467.5px;top:68px" width="9" height="9"><path d="M0.5 0.5 L8 8 M8 0.5 L0.5 8" stroke="#65686a" stroke-width="1.1"/></svg>
<div class="a" style="left:1483px;top:59px;width:139px;height:26px;background:#3c3f41"></div>
<svg style="left:1493px;top:65px" width="14" height="14"><path d="M3 0 H10 V14 H1 V3Z" fill="#9aa1a7"/><path d="M1 3 H3 V0Z" fill="#3c3f41"/><rect x="4" y="6" width="10" height="9" fill="#3c3f41"/><rect x="5" y="10" width="2" height="5" fill="#e86a2f"/><rect x="8" y="8" width="2" height="7" fill="#f0a732"/><rect x="11" y="6" width="2" height="9" fill="#62b543"/></svg>
<div class="t" style="left:1511px;top:66px">gradle.properties</div>
<svg style="left:1606px;top:68px" width="9" height="9"><path d="M0.5 0.5 L8 8 M8 0.5 L0.5 8" stroke="#65686a" stroke-width="1.1"/></svg>
<div class="a" style="left:1622px;top:59px;width:112px;height:26px;background:#3c3f41"></div>
<svg style="left:1629px;top:66px" width="16" height="12"><path d="M1 11.5 C0.3 7 1.5 3 6.5 2.4 C9 2.1 11 2.6 12.2 3.6 C13 2.6 12.6 1.4 11.4 1.4 L12 0.2 C14.8 0.4 15.6 3.4 13.6 6.2 L12.6 8.2 L12.4 11.5 L10.4 11.5 L10 9.6 L8.2 9.9 L7.6 11.5 L5.6 11.5 L5.2 9.9 L3.6 9.9 L3 11.5 Z" fill="#8c9399"/></svg>
<div class="t" style="left:1650px;top:66px">build.gradle</div>
<svg style="left:1719px;top:68px" width="9" height="9"><path d="M0.5 0.5 L8 8 M8 0.5 L0.5 8" stroke="#65686a" stroke-width="1.1"/></svg>
<div class="a" style="left:1734px;top:59px;width:110px;height:26px;background:#44433d"></div>
<svg style="left:1742.5px;top:65px" width="15" height="15"><path d="M2 4 L6 0 V4Z M7 0 H12 V7 H2 V5 H7Z" fill="#9aa4ab"/><rect x="0" y="8" width="15" height="7" fill="#4096be"/></svg>
<svg style="left:1742.5px;top:65px" width="15" height="15"><ellipse cx="4" cy="11.5" rx="1.7" ry="2.3" fill="none" stroke="#1f2a30" stroke-width="1.1"/><path d="M7 10 L8.5 9 V14" fill="none" stroke="#1f2a30" stroke-width="1.2"/></svg>
<div class="t" style="left:1762px;top:66px">Icarus.class</div>
<svg style="left:1828px;top:68px" width="9" height="9"><path d="M0.5 0.5 L8 8 M8 0.5 L0.5 8" stroke="#65686a" stroke-width="1.1"/></svg>
<div class="a" style="left:506px;top:85px;width:1384px;height:1px;background:#2b2b2b"></div>
<div class="a" style="left:506px;top:83px;width:138px;height:3px;background:#747a80"></div>
<svg style="left:1876px;top:66px" width="4" height="14"><circle cx="2" cy="2" r="1.4" fill="#afb1b3"/><circle cx="2" cy="6.5" r="1.4" fill="#afb1b3"/><circle cx="2" cy="11" r="1.4" fill="#afb1b3"/></svg>
<div class="a" style="left:506px;top:86px;width:1384px;height:903px;background:#2b2b2b"></div>
<div class="a" style="left:506px;top:86px;width:59px;height:903px;background:#313335"></div>
<div class="a" style="left:564px;top:86px;width:1px;height:903px;background:#555555"></div>
<div class="a" style="left:1530px;top:86px;width:1px;height:903px;background:#3b3b3b"></div>
<div class="a" style="left:565px;top:702px;width:1325px;height:22px;background:#323232"></div>
<div class="a" style="left:1530px;top:702px;width:1px;height:22px;background:#3b3b3b"></div>
<div class="t" style="left:1826px;top:93px;color:#d4d4d4">Indexing...</div>
<div class="ln" style="top:88px;color:#606366">1</div>
<div class="code" style="top:88px"><span class="k">package</span> script.fixarus.mixin<span class="k">;</span></div>
<div class="ln" style="top:110px;color:#606366">2</div>
<div class="ln" style="top:132px;color:#606366">3</div>
<div class="code" style="top:132px"><span class="k">import</span> dev.cammiescorner.icarus.common.powers.WingsPower<span class="k">;</span></div>
<div class="ln" style="top:154px;color:#606366">4</div>
<div class="code" style="top:154px"><span class="k">import</span> dev.cammiescorner.icarus.core.util.DefaultWingsValues<span class="k">;</span></div>
<div class="ln" style="top:176px;color:#606366">5</div>
<div class="code" style="top:176px"><span class="k">import</span> dev.cammiescorner.icarus.core.util.WingsValues<span class="k">;</span></div>
<div class="ln" style="top:198px;color:#606366">6</div>
<div class="code" style="top:198px"><span class="k">import</span> io.github.apace100.apoli.component.PowerHolderComponent<span class="k">;</span></div>
<div class="ln" style="top:220px;color:#606366">7</div>
<div class="code" style="top:220px"><span class="k">import</span> net.minecraft.entity.Entity<span class="k">;</span></div>
<div class="ln" style="top:242px;color:#606366">8</div>
<div class="code" style="top:242px"><span class="k">import</span> org.spongepowered.asm.mixin.Mixin<span class="k">;</span></div>
<div class="ln" style="top:264px;color:#606366">9</div>
<div class="code" style="top:264px"><span class="k">import</span> org.spongepowered.asm.mixin.injection.At<span class="k">;</span></div>
<div class="ln" style="top:286px;color:#606366">10</div>
<div class="code" style="top:286px"><span class="k">import</span> org.spongepowered.asm.mixin.injection.Inject<span class="k">;</span></div>
<div class="ln" style="top:308px;color:#606366">11</div>
<div class="code" style="top:308px"><span class="k">import</span> org.spongepowered.asm.mixin.injection.callback.CallbackInfoReturnable<span class="k">;</span></div>
<div class="ln" style="top:330px;color:#606366">12</div>
<div class="ln" style="top:352px;color:#606366">13</div>
<div class="code" style="top:352px"><span class="k">import</span> java.util.function.Function<span class="k">;</span></div>
<div class="ln" style="top:396px;color:#606366">14</div>
<div class="code" style="top:396px">@Mixin(targets = <span class="s">"dev/cammiescorner/icarus/core/integration/IcarusOrigins"</span><span class="k">,</span> remap = <span class="k">false</span>)</div>
<div class="ln" style="top:418px;color:#606366">15</div>
<div class="code" style="top:418px"><span class="k">public abstract class</span> RepairMixin {</div>
<div class="ln" style="top:462px;color:#606366">16</div>
<div class="code" style="top:462px">    @Inject(method = <span class="s">"getWingValues"</span><span class="k">,</span> at = @At(<span class="s">"HEAD"</span>)<span class="k">,</span> cancellable = <span class="k">true</span>)</div>
<div class="ln" style="top:484px;color:#606366">17</div>
<div class="code" style="top:484px">    <span class="k">private static void</span> correct_mistake(CallbackInfoReturnable&lt;Function&lt;Entity<span class="k">,</span> WingsValues&gt;&gt; cir){</div>
<div class="ln" style="top:506px;color:#606366">18</div>
<div class="code" style="top:506px">        cir.setReturnValue(entity -&gt; {</div>
<div class="ln" style="top:528px;color:#606366">19</div>
<div class="code" style="top:528px">            <span class="k">if</span>(!PowerHolderComponent.KEY.get(entity).getPowers(WingsPower.<span class="k">class</span>).isEmpty()){</div>
<div class="ln" style="top:550px;color:#606366">20</div>
<div class="code" style="top:550px">                <span class="k">return</span> PowerHolderComponent.KEY.get(entity).getPowers(WingsPower.<span class="k">class</span>).get(<span class="n">0</span>)<span class="k">;</span></div>
<div class="ln" style="top:572px;color:#606366">21</div>
<div class="code" style="top:572px">            }</div>
<div class="ln" style="top:594px;color:#606366">22</div>
<div class="code" style="top:594px">            <span class="k">return</span> DefaultWingsValues.INSTANCE<span class="k">;</span></div>
<div class="ln" style="top:616px;color:#606366">23</div>
<div class="code" style="top:616px">        })<span class="k">;</span></div>
<div class="ln" style="top:638px;color:#606366">24</div>
<div class="code" style="top:638px">    }</div>
<div class="ln" style="top:660px;color:#606366">25</div>
<div class="ln" style="top:704px;color:#a4a3a3">26</div>
<div class="code" style="top:704px">    @Inject(method = <span class="s">"hasWings"</span><span class="k">,</span> at = @At(<span class="s">"HEAD"</span>)<span class="k">,</span> cancellable = <span class="k">true</span>)</div>
<div class="ln" style="top:726px;color:#606366">27</div>
<div class="code" style="top:726px">    <span class="k">private static void</span> man(Entity entity<span class="k">,</span> CallbackInfoReturnable&lt;Boolean&gt; cir){</div>
<div class="ln" style="top:748px;color:#606366">28</div>
<div class="code" style="top:748px">        cir.setReturnValue(!PowerHolderComponent.KEY.get(entity).getPowers(WingsPower.<span class="k">class</span>).isEmpty())<span class="k">;</span></div>
<div class="ln" style="top:770px;color:#606366">29</div>
<div class="code" style="top:770px">    }</div>
<div class="ln" style="top:792px;color:#606366">30</div>
<div class="code" style="top:792px">}</div>
<div class="ln" style="top:814px;color:#606366">31</div>
<svg style="left:560px;top:137px" width="10" height="12"><path d="M0.5 0.5 H8.5 V6.8 L4.5 10.8 L0.5 6.8Z" fill="#2b2b2b" stroke="#6e6e6e" stroke-width="1"/><path d="M2.5 4.5 H6.5" stroke="#7e7e7e" stroke-width="1"/></svg>
<svg style="left:560px;top:489px" width="10" height="12"><path d="M0.5 0.5 H8.5 V6.8 L4.5 10.8 L0.5 6.8Z" fill="#2b2b2b" stroke="#6e6e6e" stroke-width="1"/><path d="M2.5 4.5 H6.5" stroke="#7e7e7e" stroke-width="1"/></svg>
<svg style="left:560px;top:511px" width="10" height="12"><path d="M0.5 0.5 H8.5 V6.8 L4.5 10.8 L0.5 6.8Z" fill="#2b2b2b" stroke="#6e6e6e" stroke-width="1"/><path d="M2.5 4.5 H6.5" stroke="#7e7e7e" stroke-width="1"/></svg>
<svg style="left:560px;top:533px" width="10" height="12"><path d="M0.5 0.5 H8.5 V6.8 L4.5 10.8 L0.5 6.8Z" fill="#2b2b2b" stroke="#6e6e6e" stroke-width="1"/><path d="M2.5 4.5 H6.5" stroke="#7e7e7e" stroke-width="1"/></svg>
<svg style="left:560px;top:731px" width="10" height="12"><path d="M0.5 0.5 H8.5 V6.8 L4.5 10.8 L0.5 6.8Z" fill="#2b2b2b" stroke="#6e6e6e" stroke-width="1"/><path d="M2.5 4.5 H6.5" stroke="#7e7e7e" stroke-width="1"/></svg>
<svg style="left:560px;top:574px" width="10" height="12"><path d="M0.5 11.5 H8.5 V5.2 L4.5 1.2 L0.5 5.2Z" fill="#2b2b2b" stroke="#6e6e6e" stroke-width="1"/><path d="M2.5 7.5 H6.5" stroke="#7e7e7e" stroke-width="1"/></svg>
<svg style="left:560px;top:618px" width="10" height="12"><path d="M0.5 11.5 H8.5 V5.2 L4.5 1.2 L0.5 5.2Z" fill="#2b2b2b" stroke="#6e6e6e" stroke-width="1"/><path d="M2.5 7.5 H6.5" stroke="#7e7e7e" stroke-width="1"/></svg>
<svg style="left:560px;top:640px" width="10" height="12"><path d="M0.5 11.5 H8.5 V5.2 L4.5 1.2 L0.5 5.2Z" fill="#2b2b2b" stroke="#6e6e6e" stroke-width="1"/><path d="M2.5 7.5 H6.5" stroke="#7e7e7e" stroke-width="1"/></svg>
<svg style="left:560px;top:772px" width="10" height="12"><path d="M0.5 11.5 H8.5 V5.2 L4.5 1.2 L0.5 5.2Z" fill="#2b2b2b" stroke="#6e6e6e" stroke-width="1"/><path d="M2.5 7.5 H6.5" stroke="#7e7e7e" stroke-width="1"/></svg>
<div class="a" style="left:1890px;top:59px;width:22px;height:930px;background:#3c3f41"></div>
<div class="a" style="left:1912px;top:105px;width:2px;height:196px;background:#a9a9a9"></div>
<svg style="left:1894px;top:70px" width="13" height="14"><path d="M6.5 0.5 C3 0.5 2 3 2 6 V9 L0.5 11 H12.5 L11 9 V6 C11 3 10 0.5 6.5 0.5Z" fill="#afb1b3"/><circle cx="6.5" cy="12.5" r="1.5" fill="#afb1b3"/></svg>
<div class="t" style="left:1895px;top:87px;color:#bbbbbb;transform-origin:0 0;transform:rotate(90deg) translate(0,-12px);font-size:11px">Notifications</div>
<svg style="left:1893px;top:176px" width="14" height="12"><path d="M1 11.5 C0.3 7 1.5 3 6.5 2.4 C9 2.1 11 2.6 12.2 3.6 C13 2.6 12.6 1.4 11.4 1.4 L12 0.2 C14.8 0.4 15.6 3.4 13.6 6.2 L12.6 8.2 L12.4 11.5 L10.4 11.5 L10 9.6 L8.2 9.9 L7.6 11.5 L5.6 11.5 L5.2 9.9 L3.6 9.9 L3 11.5 Z" fill="#afb1b3"/></svg>
<div class="t" style="left:1895px;top:193px;color:#bbbbbb;transform-origin:0 0;transform:rotate(90deg) translate(0,-12px);font-size:11px">Gradle</div>
<div class="a" style="left:8px;top:989px;width:1904px;height:1px;background:#323232"></div>
<div class="a" style="left:8px;top:1011px;width:1904px;height:1px;background:#38393a"></div>
<div class="t" style="left:58px;top:995px">Version Control</div>
<div class="t" style="left:178px;top:995px">TODO</div>
<div class="t" style="left:247px;top:995px">Problems</div>
<div class="t" style="left:332px;top:995px">Terminal</div>
<div class="t" style="left:414px;top:995px">Services</div>
<svg style="left:42px;top:995px" width="11" height="13"><circle cx="2" cy="2" r="1.8" fill="#afb1b3"/><circle cx="2" cy="11" r="1.8" fill="#afb1b3"/><circle cx="9" cy="2" r="1.8" fill="#afb1b3"/><path d="M2 2 V11 M9 2 C9 7 2 6 2 10" fill="none" stroke="#afb1b3" stroke-width="1.6"/></svg>
<svg style="left:162px;top:996px" width="11" height="10"><path d="M0 1 H2 M0 5 H2 M0 9 H2 M4 1 H11 M4 5 H11 M4 9 H11" stroke="#afb1b3" stroke-width="1.6"/></svg>
<svg style="left:231px;top:995px" width="12" height="12"><circle cx="6" cy="6" r="5.8" fill="#afb1b3"/><path d="M6 2.5 V7" stroke="#3c3f41" stroke-width="1.8"/><circle cx="6" cy="9.2" r="1" fill="#3c3f41"/></svg>
<svg style="left:315px;top:995px" width="12" height="12"><rect x="0" y="0" width="12" height="11" fill="#afb1b3"/><path d="M2.5 2.5 L5 5 L2.5 7.5" fill="none" stroke="#3c3f41" stroke-width="1.3"/><path d="M5.5 8.5 H9.5" stroke="#3c3f41" stroke-width="1.2"/></svg>
<svg style="left:397px;top:995px" width="13" height="13"><path d="M3.5 0.5 H9.5 L12.5 6.5 L9.5 12.5 H3.5 L0.5 6.5Z" fill="#afb1b3"/><path d="M5 3.5 L9.5 6.5 L5 9.5Z" fill="#3c3f41"/></svg>
<svg style="left:14px;top:1016px" width="13" height="12"><rect x="3.5" y="0.5" width="9" height="8" fill="none" stroke="#afb1b3"/><path d="M0.5 3 V11.5 H10" fill="none" stroke="#afb1b3"/></svg>
<div class="t" style="left:1399px;top:1015px">Scanning files to index...</div>
<div class="a" style="left:1535px;top:1020px;width:146px;height:4px;border-radius:2px;background:#555759"></div>
<div class="a" style="left:1535px;top:1020px;width:133px;height:4px;border-radius:2px;background:#a3a5a7"></div>
<div class="a" style="left:1689px;top:1015px;width:2px;height:12px;background:#8c8e90"></div>
<div class="a" style="left:1694px;top:1015px;width:2px;height:12px;background:#8c8e90"></div>
<div class="t" style="left:1711px;top:1015px">26:23</div>
<div class="t" style="left:1750px;top:1015px">CRLF</div>
<div class="t" style="left:1789px;top:1015px">UTF-8</div>
<div class="t" style="left:1831px;top:1015px">4 spaces</div>
<svg style="left:1886px;top:1015px" width="12" height="13"><path d="M1.5 6 V3.5 A2.5 2.5 0 0 1 6.5 3.5" fill="none" stroke="#afb1b3" stroke-width="1.4"/><rect x="4" y="6" width="8" height="7" fill="#afb1b3"/></svg>
</body></html>
